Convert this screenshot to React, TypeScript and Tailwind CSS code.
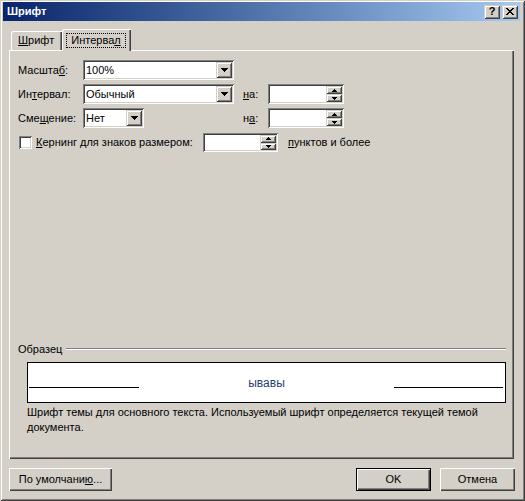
import React from "react";

const sunken =
  "shadow-[inset_1px_1px_0_#808080,inset_-1px_-1px_0_#ffffff,inset_2px_2px_0_#404040,inset_-2px_-2px_0_#d4d0c8]";
const raisedSmall =
  "shadow-[inset_1px_1px_0_#d4d0c8,inset_-1px_-1px_0_#404040,inset_2px_2px_0_#ffffff,inset_-2px_-2px_0_#808080]";
const pushBtn =
  "shadow-[inset_1px_1px_0_#ffffff,inset_-1px_-1px_0_#404040,inset_-2px_-2px_0_#808080]";
const defaultBtn =
  "shadow-[inset_0_0_0_1px_#000000,inset_2px_2px_0_#ffffff,inset_-2px_-2px_0_#404040,inset_-3px_-3px_0_#808080]";

const DownArrow = () => (
  <svg width="7" height="4" shapeRendering="crispEdges" fill="#000">
    <rect x="0" y="0" width="7" height="1" />
    <rect x="1" y="1" width="5" height="1" />
    <rect x="2" y="2" width="3" height="1" />
    <rect x="3" y="3" width="1" height="1" />
  </svg>
);

const SmallUp = () => (
  <svg width="5" height="3" shapeRendering="crispEdges" fill="#000">
    <rect x="2" y="0" width="1" height="1" />
    <rect x="1" y="1" width="3" height="1" />
    <rect x="0" y="2" width="5" height="1" />
  </svg>
);

const SmallDown = () => (
  <svg width="5" height="3" shapeRendering="crispEdges" fill="#000">
    <rect x="0" y="0" width="5" height="1" />
    <rect x="1" y="1" width="3" height="1" />
    <rect x="2" y="2" width="1" height="1" />
  </svg>
);

function Combo({ widthClass, value }: { widthClass: string; value: string }) {
  return (
    <div className={`flex h-[20px] bg-white p-[2px] ${sunken} ${widthClass}`}>
      <div className="flex-1 pl-[1px] leading-[16px] whitespace-nowrap overflow-hidden">{value}</div>
      <div className={`flex h-[16px] w-[16px] items-center justify-center bg-[#d4d0c8] ${raisedSmall}`}>
        <DownArrow />
      </div>
    </div>
  );
}

function Spinner({ widthClass, heightClass }: { widthClass: string; heightClass: string }) {
  return (
    <div className={`flex justify-end bg-white p-[2px] ${sunken} ${widthClass} ${heightClass}`}>
      <div className="flex w-[16px] flex-col">
        <div className={`flex flex-1 items-center justify-center bg-[#d4d0c8] ${raisedSmall}`}>
          <SmallUp />
        </div>
        <div className={`flex flex-1 items-center justify-center bg-[#d4d0c8] ${raisedSmall}`}>
          <SmallDown />
        </div>
      </div>
    </div>
  );
}

export default function App() {
  return (
    <div
      className="relative h-[501px] w-[525px] overflow-hidden bg-[#d4d0c8] text-[11px] text-black shadow-[inset_1px_1px_0_#d4d0c8,inset_-1px_-1px_0_#404040,inset_2px_2px_0_#ffffff,inset_-2px_-2px_0_#808080]"
      style={{ fontFamily: '"Liberation Sans", Arial, sans-serif' }}
    >
      {/* Title bar */}
      <div className="ml-[3px] mr-[5px] pt-[2px]">
        <div className="flex h-[19px] items-center justify-between bg-gradient-to-r from-[#0a246a] to-[#a6caf0] pl-[4px] pr-[2px]">
          <span className="font-bold text-white">Шрифт</span>
          <div className="flex gap-[2px]">
            <div className={`flex h-[14px] w-[16px] items-center justify-center bg-[#d4d0c8] text-[11px] font-bold leading-none ${raisedSmall}`}>
              ?
            </div>
            <div className={`flex h-[14px] w-[16px] items-center justify-center bg-[#d4d0c8] ${raisedSmall}`}>
              <svg width="8" height="7" shapeRendering="crispEdges" fill="#000">
                <rect x="0" y="0" width="2" height="1" />
                <rect x="6" y="0" width="2" height="1" />
                <rect x="1" y="1" width="2" height="1" />
                <rect x="5" y="1" width="2" height="1" />
                <rect x="2" y="2" width="4" height="1" />
                <rect x="3" y="3" width="2" height="1" />
                <rect x="2" y="4" width="4" height="1" />
                <rect x="1" y="5" width="2" height="1" />
                <rect x="5" y="5" width="2" height="1" />
                <rect x="0" y="6" width="2" height="1" />
                <rect x="6" y="6" width="2" height="1" />
              </svg>
            </div>
          </div>
        </div>
      </div>

      {/* Tabs */}
      <div className="ml-[9px] mt-[8px] w-[505px]">
        <div className="flex h-[21px] items-end pl-[2px]">
          <div className="flex h-[19px] w-[51px] items-center rounded-tl-[2px] bg-[#d4d0c8] pl-[7px] shadow-[inset_1px_1px_0_#ffffff,inset_-1px_0_0_#404040,inset_-2px_0_0_#808080]">
            <span>
              <span className="underline">Ш</span>рифт
            </span>
          </div>
          <div className="relative z-10 -mb-[1px] flex h-[22px] w-[69px] items-start rounded-tl-[2px] bg-[#d4d0c8] pl-[4px] pt-[4px] shadow-[inset_1px_1px_0_#ffffff,inset_-1px_0_0_#404040,inset_-2px_0_0_#808080]">
            <span className="flex h-[15px] w-[60px] items-center justify-center border border-dotted border-black leading-none">
              <span>
                Интерва<span className="underline">л</span>
              </span>
            </span>
          </div>
        </div>

        {/* Panel */}
        <div className="flex h-[409px] flex-col pl-[9px] pr-[8px] pt-[10px] shadow-[inset_1px_1px_0_#ffffff,inset_-1px_-1px_0_#404040,inset_-2px_-2px_0_#808080]">
          <div className="flex h-[20px] items-center">
            <div className="w-[65px]">
              Масшта<span className="underline">б</span>:
            </div>
            <Combo widthClass="w-[151px]" value="100%" />
          </div>
          <div className="mt-[4px] flex h-[20px] items-center">
            <div className="w-[65px]">
              Ин<span className="underline">т</span>ервал:
            </div>
            <div className="w-[160px]">
              <Combo widthClass="w-[151px]" value="Обычный" />
            </div>
            <div className="w-[25px]">
              <span className="underline">н</span>а:
            </div>
            <Spinner widthClass="w-[76px]" heightClass="h-[20px]" />
          </div>
          <div className="mt-[4px] flex h-[20px] items-center">
            <div className="w-[65px]">
              Сме<span className="underline">щ</span>ение:
            </div>
            <div className="w-[160px]">
              <Combo widthClass="w-[61px]" value="Нет" />
            </div>
            <div className="w-[25px]">
              н<span className="underline">а</span>:
            </div>
            <Spinner widthClass="w-[76px]" heightClass="h-[20px]" />
          </div>
          <div className="mt-[5px] flex h-[19px] items-center">
            <div className={`ml-[1px] h-[13px] w-[13px] bg-white ${sunken}`} />
            <div className="ml-[4px] w-[167px] whitespace-nowrap">
              <span className="underline">К</span>ернинг для знаков размером:
            </div>
            <Spinner widthClass="w-[75px]" heightClass="h-[19px]" />
            <div className="ml-[10px]">
              <span className="underline">п</span>унктов и более
            </div>
          </div>

          {/* Sample */}
          <div className="mt-[190px] flex h-[14px] items-center gap-[4px]">
            <span>Образец</span>
            <div className="h-[2px] flex-1 border-b border-t border-b-white border-t-[#808080]" />
          </div>
          <div className="ml-[9px] mt-[6px] h-[41px] border border-black bg-white">
            <div className="flex h-[25px] items-end">
              <div className="ml-[1px] h-px w-[110px] bg-black" />
              <div className="-mb-[1px] flex-1 text-center text-[12px] leading-none text-[#1f3f6f]">ывавы</div>
              <div className="mr-[2px] h-px w-[109px] bg-black" />
            </div>
          </div>
          <div className="ml-[9px] mt-[2px] whitespace-nowrap leading-[15px]">
            Шрифт темы для основного текста. Используемый шрифт определяется текущей темой
            <br />
            документа.
          </div>
        </div>
      </div>

      {/* Bottom buttons */}
      <div className="ml-[9px] mt-[9px] flex w-[506px] items-center justify-between">
        <div className={`flex h-[23px] w-[103px] items-center justify-center bg-[#d4d0c8] ${pushBtn}`}>
          <span>
            По умолчани<span className="underline">ю</span>...
          </span>
        </div>
        <div className="flex gap-[9px]">
          <div className={`flex h-[23px] w-[75px] items-center justify-center bg-[#d4d0c8] ${defaultBtn}`}>OK</div>
          <div className={`flex h-[23px] w-[75px] items-center justify-center bg-[#d4d0c8] ${pushBtn}`}>Отмена</div>
        </div>
      </div>
    </div>
  );
}
